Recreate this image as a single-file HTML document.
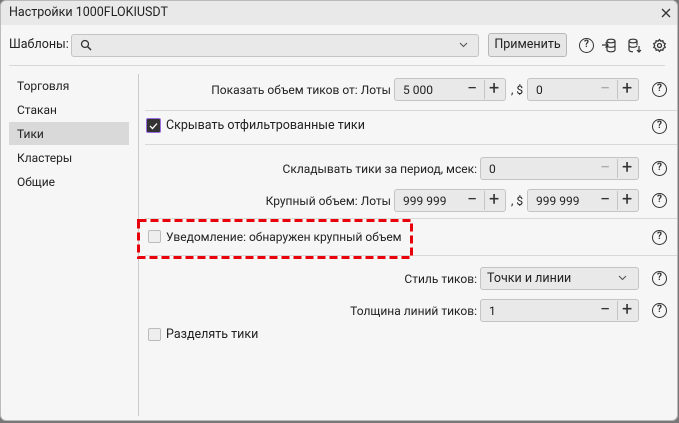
<!DOCTYPE html><html><head><meta charset="utf-8"><style>
*{box-sizing:border-box;margin:0;padding:0}
body{width:679px;height:423px;background:#777;font-family:"Roboto","Liberation Sans",sans-serif;font-size:12px;color:#222;position:relative;overflow:hidden}
.dlg{position:absolute;left:0;top:0;width:678px;height:421px;background:#f6f6f6;border:1px solid #bbb;border-radius:6px;overflow:hidden}
.t{position:absolute;white-space:nowrap;line-height:14px}
.r{text-align:right}
.title{position:absolute;left:0;top:0;width:100%;height:24px;background:#e9e9e9}
.box{position:absolute;background:#e9e9e9;border:1px solid #c4c4c4;border-radius:3px;height:23px}
.hl{position:absolute;height:1px;background:#d8d8d8}
.help{position:absolute;width:15px;height:15px;border:1.3px solid #333;border-radius:50%;font-size:10px;text-align:center;line-height:12px;font-weight:bold;color:#333}
.cb{position:absolute;width:13px;height:13px;border:1px solid #bbb;border-radius:2px;background:#eee}
.sp .v{position:absolute;left:8px;top:4px}
.sp .dv{position:absolute;top:1px;width:1px;height:19px;background:#c4c4c4}
.mi,.pl{position:absolute;top:0;font-size:18px;line-height:20px;color:#333}
</style></head><body><div class="dlg">
<div class="title"></div>
<div class="t" style="left:8px;top:5px;font-size:12.5px">Настройки 1000FLOKIUSDT</div>
<svg style="position:absolute;left:660px;top:7px" width="10" height="10"><path d="M1 1L9 9M9 1L1 9" stroke="#333" stroke-width="1.3"/></svg>
<div class="t" style="left:8px;top:37px;font-size:12.5px">Шаблоны:</div>
<div class="box" style="left:70px;top:33px;width:408px"></div>
<svg style="position:absolute;left:79px;top:38px" width="12" height="12"><circle cx="5" cy="5" r="3.5" fill="none" stroke="#333" stroke-width="1.3"/><path d="M7.5 7.5L11 11" stroke="#333" stroke-width="1.5"/></svg>
<svg style="position:absolute;left:458px;top:41px" width="9" height="6"><path d="M1 1L4.5 4.5L8 1" fill="none" stroke="#555" stroke-width="1.1"/></svg>
<div class="box" style="left:487px;top:32px;width:79px;height:24px;background:#e6e6e6;border-color:#b8b8b8"></div>
<div class="t" style="left:487px;top:37px;width:79px;text-align:center;font-size:12.5px">Применить</div>
<div class="help" style="left:578px;top:37px">?</div>
<svg style="position:absolute;left:600px;top:37px" width="16" height="15" fill="none" stroke="#333" stroke-width="1.2"><ellipse cx="10" cy="3" rx="4" ry="1.8"/><path d="M6 3v9c0 1 1.8 1.8 4 1.8s4-.8 4-1.8V3M6 7.5c0 1 1.8 1.8 4 1.8s4-.8 4-1.8M1 7h6M4.5 4.5L7 7L4.5 9.5"/></svg>
<svg style="position:absolute;left:626px;top:37px" width="16" height="16" fill="none" stroke="#333" stroke-width="1.2"><ellipse cx="6" cy="3" rx="4" ry="1.8"/><path d="M2 3v9c0 1 1.8 1.8 4 1.8M10 3v4M2 7.5c0 1 1.8 1.8 4 1.8s4-.8 4-1.8M12 8v6M10 12l2 2l2-2"/></svg>
<svg style="position:absolute;left:651px;top:37px" width="15" height="15" fill="none" stroke="#333" stroke-width="1.3"><path d="M7.5 1.5l1.3 1.6 2-.4.5 2 1.9.9-.9 1.9.9 1.9-1.9.9-.5 2-2-.4-1.3 1.6-1.3-1.6-2 .4-.5-2-1.9-.9.9-1.9-.9-1.9 1.9-.9.5-2 2 .4z"/><circle cx="7.5" cy="7.5" r="2"/></svg>
<div class="hl" style="left:8px;top:64px;width:656px"></div>
<div class="t" style="left:16px;top:78px">Торговля</div>
<div class="t" style="left:16px;top:102px">Стакан</div>
<div style="position:absolute;left:8px;top:121px;width:120px;height:23px;background:#d9d9d9"></div>
<div class="t" style="left:16px;top:126px">Тики</div>
<div class="t" style="left:16px;top:150px">Кластеры</div>
<div class="t" style="left:16px;top:174px">Общие</div>
<div style="position:absolute;left:137px;top:73px;width:1px;height:342px;background:#ccc"></div>

<div class="t r" style="left:150px;top:82px;width:240px">Показать объем тиков от: Лоты</div>
<div class="box sp" style="left:393px;top:77px;width:112px"><span class="v t">5 000</span><span class="mi" style="left:72px">−</span><span class="dv" style="left:89px"></span><span class="pl" style="left:94px">+</span></div>
<div class="t" style="left:510px;top:82px">, $</div>
<div class="box sp" style="left:526px;top:77px;width:112px"><span class="v t">0</span><span class="mi" style="left:72px;color:#aaa">−</span><span class="dv" style="left:89px"></span><span class="pl" style="left:94px">+</span></div>
<div class="help" style="left:651px;top:81px">?</div>
<div class="hl" style="left:144px;top:109px;width:534px"></div>
<div class="cb" style="left:145px;top:117px;width:15px;height:15px;background:#333;border:1.5px solid #9a6ce0"></div>
<svg style="position:absolute;left:148px;top:121px" width="9" height="8"><path d="M1 4l2.5 2.5L8 1.5" fill="none" stroke="#fff" stroke-width="1.3"/></svg>
<div class="t" style="left:165px;top:118px;font-size:12.5px">Скрывать отфильтрованные тики</div>
<div class="help" style="left:651px;top:118px">?</div>
<div class="hl" style="left:144px;top:143px;width:534px"></div>

<div class="t r" style="left:200px;top:161px;width:276px">Складывать тики за период, мсек:</div>
<div class="box sp" style="left:479px;top:156px;width:159px"><span class="v t">0</span><span class="mi" style="left:119px;color:#aaa">−</span><span class="dv" style="left:136px"></span><span class="pl" style="left:141px">+</span></div>
<div class="help" style="left:651px;top:160px">?</div>
<div class="t r" style="left:200px;top:193px;width:190px">Крупный объем: Лоты</div>
<div class="box sp" style="left:393px;top:188px;width:112px"><span class="v t">999 999</span><span class="mi" style="left:72px">−</span><span class="dv" style="left:89px"></span><span class="pl" style="left:94px">+</span></div>
<div class="t" style="left:510px;top:193px">, $</div>
<div class="box sp" style="left:526px;top:188px;width:112px"><span class="v t">999 999</span><span class="mi" style="left:72px">−</span><span class="dv" style="left:89px"></span><span class="pl" style="left:94px">+</span></div>
<div class="help" style="left:651px;top:192px">?</div>
<div class="hl" style="left:144px;top:217px;width:534px"></div>
<div class="cb" style="left:147px;top:229px"></div>
<div class="t" style="left:165px;top:229px;font-size:12px">Уведомление: обнаружен крупный объем</div>
<div class="help" style="left:651px;top:229px">?</div>
<div class="hl" style="left:144px;top:254px;width:534px"></div>
<svg style="position:absolute;left:136px;top:218px" width="276" height="40"><rect x="1.5" y="1.5" width="273" height="37" fill="none" stroke="#e8000b" stroke-width="3" stroke-dasharray="8 4"/></svg>

<div class="t r" style="left:300px;top:271px;width:176px">Стиль тиков:</div>
<div class="box" style="left:479px;top:266px;width:159px"></div>
<div class="t" style="left:486px;top:271px;font-size:12.5px">Точки и линии</div>
<svg style="position:absolute;left:617px;top:274px" width="9" height="6"><path d="M1 1L4.5 4.5L8 1" fill="none" stroke="#555" stroke-width="1.1"/></svg>
<div class="help" style="left:651px;top:270px">?</div>
<div class="t r" style="left:300px;top:303px;width:176px">Толщина линий тиков:</div>
<div class="box sp" style="left:479px;top:298px;width:159px"><span class="v t">1</span><span class="mi" style="left:119px">−</span><span class="dv" style="left:136px"></span><span class="pl" style="left:141px">+</span></div>
<div class="help" style="left:651px;top:302px">?</div>
<div class="cb" style="left:147px;top:327px"></div>
<div class="t" style="left:165px;top:327px;font-size:12.5px">Разделять тики</div>
</div></body></html>
